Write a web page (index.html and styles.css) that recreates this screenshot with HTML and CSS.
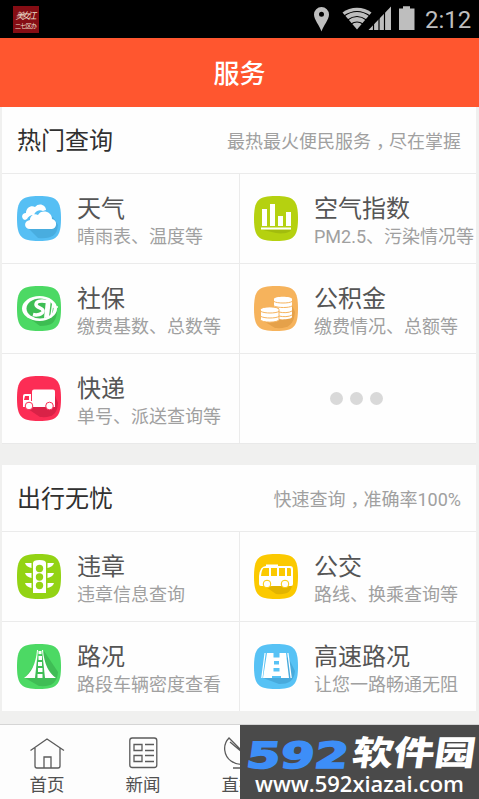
FILE: index.html
```html
<!DOCTYPE html>
<html lang="zh-CN">
<head>
<meta charset="utf-8">
<title>服务</title>
<link rel="stylesheet" href="styles.css">
</head>
<body>
<svg class="defs"><defs><path id="tile" d="M22 0C40 0 44 4.500 44 22.500S40 45 22 45 0 40.500 0 22.500 4 0 22 0z"/></defs></svg>
<div class="status">
  <svg class="app" viewBox="0 0 26 27"><rect width="26" height="27" fill="#850d14"/><g fill="#eadbc8"><text class="brush" x="2.5" y="13" textLength="21">美女江</text><text class="tiny" x="2" y="22" textLength="22">二七区办</text></g></svg>
  <svg class="signals" viewBox="0 0 105 30">
    <g fill="#bebebe">
      <path fill-rule="evenodd" d="M9.500 3a7.500 7.500 0 0 0-7.500 7.500c0 5 5.500 11 7.500 17 2-6 7.500-12 7.500-17a7.500 7.500 0 0 0-7.500-7.500zm0 4.800a2.500 2.500 0 1 1 0 5 2.500 2.500 0 0 1 0-5z"/>
      <path d="M45 25.500 30.500 8.500C38 2 52 2 59.500 8.500z"/>
      <path d="M56.500 26 79 2.500V26z"/>
      <path d="M87 4.500h4V2.200h7v2.300h4.500V26H87z"/>
    </g>
    <g fill="none" stroke="#000" stroke-width="1.200"><path d="M32 12q13-9 26 0M35.500 16q9.500-7 19 0M39 20q6-4 12 0M61.500 19v8M67 13v14M72.500 7v20"/></g>
  </svg>
  <span class="clock">2:12</span>
</div>
<header class="bar">服务</header>
<main>
  <section class="card">
    <div class="head"><h2>热门查询</h2><p>最热最火便民服务<span class="comma">，</span>尽在掌握</p></div>
    <div class="grid">
      <div class="cell"><svg class="ico" viewBox="0 0 44 45"><use href="#tile" fill="#56bff4"/><path fill="#49addf" d="m12 33 9 9c13 1 19-2 20-13l-5-8z"/><path fill="#fff" d="M8 24c-4-1-4-7 1-7 0-5 5-8 9-6 4-5 11-2 11 3l-3 1c-5-2-8 1-9 4-4 0-6 2-7 4z"/><path fill="#fff" d="M13 33c-6 0-7-8 0-9 0-4 4-7 8-5 3-6 14-4 14 4 6 1 5 10 0 10z"/></svg><div><h3>天气</h3><p>晴雨表、温度等</p></div></div>
      <div class="cell"><svg class="ico" viewBox="0 0 44 45"><use href="#tile" fill="#b5d110"/><path fill="#a2bc0e" d="M9 34h28c-1 3-9 4-15 3z"/><path fill="#fff" d="M8 13h5v17H8zM16 8h5v22h-5zM24 20h5v10h-5zM32 16h5v14h-5zM7 31.500h30v2H7z"/></svg><div><h3>空气指数</h3><p>PM2.5、污染情况等</p></div></div>
      <div class="cell"><svg class="ico" viewBox="0 0 44 45"><use href="#tile" fill="#4cd964"/><path fill="#3dbd52" d="m12 32 11 8c11 0 16-3 17-14l-3-5z"/><ellipse cx="22.500" cy="22.500" rx="17.500" ry="12.500" fill="#fff"/><ellipse cx="23" cy="22.500" rx="13.500" ry="10" fill="#3fbe55"/><path fill="none" stroke="#fff" stroke-width="3.500" d="M30 15.500c-7-1.500-11 0-11 3 0 4 8 3 7 7-1 3-6 4-10 3"/><path fill="#fff" d="m29 14 5-1-2 18-5 1z"/><path fill="none" stroke="#fff" stroke-width="1.500" d="m36 16-2 14M36 21h5"/></svg><div><h3>社保</h3><p>缴费基数、总数等</p></div></div>
      <div class="cell"><svg class="ico" viewBox="0 0 44 45"><use href="#tile" fill="#f6b35c"/><path fill="#e5a14a" d="m8 34 13 8c13 1 19-3 20-16l-4-9z"/><path fill="#fff" d="M20 13c0-3 18-3 18 0v18c0 2-10 3-13 2V22l-5-1z"/><path fill="#fff" stroke="#f6b35c" d="M6.500 23.500c0-3.500 18.500-3.500 18.500 0v10c0 3.500-18.500 3.500-18.500 0z"/><g fill="none" stroke="#f6b35c" stroke-width="1"><path d="M20 15.500c3 2 15 2 18 0M20 20c4 2 15 2 18 0M25 26c4 1 10 1 13-1M25 30c4 1 10 1 13-1M7 25.500c4 2 14 2 18 0M7 30.500c4 2 14 2 18 0"/></g></svg><div><h3>公积金</h3><p>缴费情况、总额等</p></div></div>
      <div class="cell"><svg class="ico" viewBox="0 0 44 45"><use href="#tile" fill="#fc2d55"/><path fill="#d92247" d="m11 33 12 8c13 1 17-3 18-14l-4-10z"/><path fill="#fff" d="M15 15.500q0-2 2-2h19q2 0 2 2V31H6V20q0-2 2-2h6v7h1z"/><path fill="#fc2d55" d="M8 20h4v4H7z"/><g fill="#fff" stroke="#fc2d55"><circle cx="12" cy="30" r="3.800"/><circle cx="32.500" cy="30" r="3.800"/></g></svg><div><h3>快递</h3><p>单号、派送查询等</p></div></div>
      <div class="cell more"><i></i><i></i><i></i></div>
    </div>
  </section>
  <section class="card second">
    <div class="head"><h2>出行无忧</h2><p>快速查询<span class="comma">，</span>准确率100%</p></div>
    <div class="grid">
      <div class="cell"><svg class="ico" viewBox="0 0 44 45"><use href="#tile" fill="#93d314"/><path fill="#fff" d="M16 39V9q0-3 6.500-3T29 9v30zM8 9h6.500v5C11 13 9 12 8 9zM8 19h6.500v5c-3.500-1-5.500-2-6.500-5zM8 29h6.500v5c-3.500-1-5.500-2-6.500-5zM37 9h-6.500v5c3.500-1 5.500-2 6.500-5zM37 19h-6.500v5c3.500-1 5.500-2 6.500-5zM37 29h-6.500v5c3.500-1 5.500-2 6.500-5z"/><g fill="#93d314"><circle cx="22.500" cy="14.500" r="3.700"/><circle cx="22.500" cy="23" r="3.700"/><circle cx="22.500" cy="31.500" r="3.700"/></g></svg><div><h3>违章</h3><p>违章信息查询</p></div></div>
      <div class="cell"><svg class="ico" viewBox="0 0 44 45"><use href="#tile" fill="#fbc900"/><path fill="#e2b400" d="m12 33 10 7c11 1 15-2 16-9l-3-1z"/><path fill="#fff" d="M12 12v-1.500h12V12h12q3 0 3 3v15q0 2-2 2H7q-2 0-2-2v-8q1-10 7-10z"/><path fill="#fbc900" d="M9.500 14H15v8H7q.5-6 2.500-8zM17 14h6v8h-6zM25 14h6v8h-6zM33 14h3q1 0 1 2v6h-4z"/><g fill="#fff" stroke="#fbc900"><circle cx="13" cy="30" r="3.800"/><circle cx="31" cy="30" r="3.800"/></g></svg><div><h3>公交</h3><p>路线、换乘查询等</p></div></div>
      <div class="cell"><svg class="ico" viewBox="0 0 44 45"><use href="#tile" fill="#4cd964"/><path fill="#3fbd55" d="m8 34 14 8c13 1 18-3 19-14L27 7z"/><path fill="#fff" d="M20 6h1l-3 28H7c7-5 12-14 13-28zM26 6h-1l3 28h11C32 29 27 20 26 6zM21.500 7h3v3h-3zM21.500 12h3.500v4h-3.500zM21 18h4v4h-4zM21 24h4.500v4H21zM20.500 30h5v4h-5z"/></svg><div><h3>路况</h3><p>路段车辆密度查看</p></div></div>
      <div class="cell"><svg class="ico" viewBox="0 0 44 45"><use href="#tile" fill="#57c2f5"/><path fill="#48aadc" d="m9 34 16 6c10 0 15-3 16-13l-7-14z"/><path fill="#fff" d="M13 9h19l3 25H9zM10.500 9h1.200L8.500 34H7.200zM33.300 9h1.200L37.800 34h-1.300z"/><path fill="#57c2f5" d="M19.500 9h6v4.500h-6zM20 17h5v3.500h-5zM19.500 24h6v3.500h-6zM18 32h9v2h-9z"/></svg><div><h3>高速路况</h3><p>让您一路畅通无阻</p></div></div>
    </div>
  </section>
</main>
<nav class="tabs">
  <div class="tab"><svg viewBox="0 0 36 34"><path d="M1.500 15.500 18 4l17 11.500M6 13v18q0 2 2 2h21q2 0 2-2V13M15 33V22h7v11"/></svg><span>首页</span></div>
  <div class="tab"><svg viewBox="0 0 36 34"><rect x="4.800" y="3" width="27" height="29.500" rx="2.500"/><path d="M9 9.500h8v6H9zM9 20.500h8v6H9zM20 9.500h9M20 15.500h9M20 20.500h9M20 26.500h9"/></svg><span>新闻</span></div>
  <div class="tab"><svg viewBox="0 0 36 34"><path d="M8 3C1 10 3 21 10 26s15 4 20-1zM9 7l19 16M12 33h8v-5"/></svg><span>直播</span></div>
</nav>
<svg class="mark" viewBox="0 0 239 74">
  <rect width="239" height="74" fill="#4a4a4a"/>
  <g transform="translate(5 43) skewX(-8)"><text class="num" x="0" y="0" textLength="102" lengthAdjust="spacingAndGlyphs">592</text></g>
  <g transform="translate(111 40) skewX(-8)"><text class="zh" x="0" y="0" textLength="123" lengthAdjust="spacingAndGlyphs">软件园</text></g>
  <text class="url" x="15" y="67" textLength="209" lengthAdjust="spacingAndGlyphs">www.592xiazai.com</text>
</svg>
</body>
</html>
```
FILE: styles.css
```css
* { box-sizing: border-box; }
body { margin: 0; width: 479px; height: 799px; overflow: hidden; display: flex; flex-direction: column; background: #f0f0ef; font-family: Roboto, "Noto Sans CJK SC", sans-serif; }
h2, h3, p { margin: 0; font-weight: 400; white-space: nowrap; }
.defs { position: absolute; width: 0; height: 0; }
.status { flex: none; height: 38px; background: #000; display: flex; align-items: center; padding: 0 8px 0 13px; }
.app { width: 26px; height: 27px; margin-top: 1px; }
.brush { font: italic 9px "Noto Sans CJK SC", sans-serif; }
.tiny { font: 6px "Noto Sans CJK SC", sans-serif; }
.signals { width: 105px; height: 30px; margin-left: auto; }
.clock { width: 46px; margin-left: 8px; color: #bebebe; font-size: 24px; line-height: 38px; padding-top: 1px; }
.bar { flex: none; height: 69px; background: #ff562f; color: #fff; font-size: 26px; font-weight: 500; line-height: 72px; text-align: center; }
main { flex: none; height: 617px; }
.card { width: 474px; margin-left: 2px; background: #fefefe; border-bottom: 1px solid #e9e9e9; }
.second { margin-top: 21px; border-bottom: 0; }
.head { height: 66px; display: flex; align-items: center; justify-content: space-between; padding: 2px 15px 0 15px; }
.head h2 { font-size: 24px; line-height: 36px; color: #303030; }
.head p { font-size: 18px; line-height: 28px; color: #a0a0a0; }
.comma { font-family: "Noto Sans CJK SC", sans-serif; font-feature-settings: "halt"; padding: 0 4px 0 5px; }
.grid { display: grid; grid-template-columns: 237px 237px; grid-auto-rows: 90px; }
.cell { display: flex; gap: 16px; padding-left: 15px; border-top: 1px solid #ebebeb; }
.cell:nth-child(even) { border-left: 1px solid #ebebeb; padding-left: 14px; }
.ico { flex: none; width: 44px; height: 45px; margin-top: 22px; }
.cell h3 { font-size: 24px; line-height: 30px; margin-top: 20px; color: #555; }
.cell p { font-size: 18px; line-height: 26px; color: #a0a0a0; }
.cell.more { align-items: center; justify-content: center; gap: 7px; padding: 0 4px 0 0; }
.more i { width: 13px; height: 13px; border-radius: 50%; background: #d9d9d9; }
.tabs { flex: none; height: 75px; border-top: 1px solid #d5d5d5; background: #fdfdfd; display: grid; grid-template-columns: repeat(5, 96px); }
.tab { display: flex; flex-direction: column; align-items: center; padding: 10px 2px 0 0; }
.tab svg { width: 36px; height: 34px; fill: none; stroke: #5b5b5b; stroke-width: 1.3; }
.tab span { font-size: 17.5px; line-height: 24px; margin-top: 4px; color: #505050; }
.mark { position: absolute; left: 240px; top: 725px; width: 239px; height: 74px; }
.num { font: bold 36px "DejaVu Sans", sans-serif; fill: #3d8ef8; stroke: #3d8ef8; stroke-width: 1.6; }
.zh { font: 900 34px "Noto Sans CJK SC", sans-serif; fill: #fff; }
.url { font: 600 22px "Open Sans", sans-serif; fill: #fff; }
```
